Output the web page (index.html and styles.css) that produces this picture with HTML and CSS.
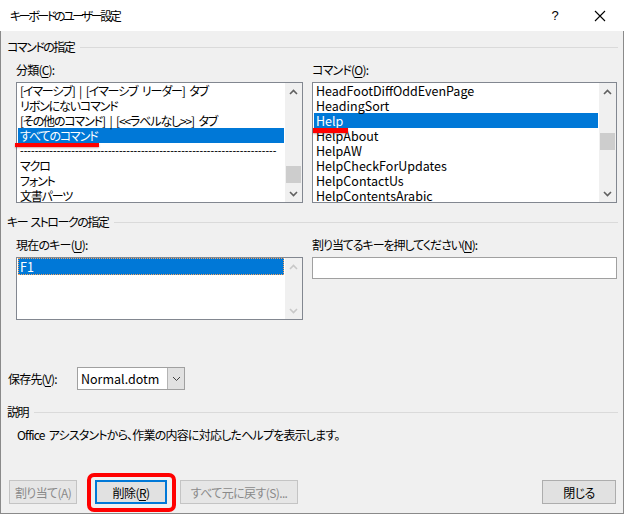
FILE: index.html
```html
<!DOCTYPE html>
<html lang="ja">
<head>
<meta charset="utf-8">
<link rel="stylesheet" href="styles.css">
</head>
<body>
<div class="win">
  <div class="titlebar">
    <span class="title">キーボードのユーザー設定</span>
    <span class="help">?</span>
    <span class="close"><svg width="12" height="12" viewBox="0 0 12 12"><path d="M1 1L11 11M11 1L1 11" stroke="#000" stroke-width="1.1" fill="none"/></svg></span>
  </div>
  <div class="body">
    <div class="group"><span>コマンドの指定</span></div>
    <div class="cols top">
      <div class="col left">
        <div class="label">分類(<u>C</u>):</div>
        <div class="listbox tall">
          <ul class="items jp">
            <li>[イマーシブ] | [イマーシブ リーダー] タブ</li>
            <li>リボンにないコマンド</li>
            <li>[その他のコマンド] | [&lt;&lt;ラベルなし&gt;&gt;] タブ</li>
            <li class="sel">すべてのコマンド</li>
            <li class="dash">----------------------------------------------------------------------</li>
            <li>マクロ</li>
            <li>フォント</li>
            <li>文書パーツ</li>
          </ul>
          <div class="scroll">
            <span class="arrow"><svg width="9" height="6" viewBox="0 0 9 6"><path d="M1 5L4.5 1.5L8 5" stroke="#606060" stroke-width="1.6" fill="none"/></svg></span>
            <div class="track"><div class="thumb thumb-l"></div></div>
            <span class="arrow"><svg width="9" height="6" viewBox="0 0 9 6"><path d="M1 1L4.5 4.5L8 1" stroke="#606060" stroke-width="1.6" fill="none"/></svg></span>
          </div>
        </div>
        <span class="mark mark-l"></span>
      </div>
      <div class="col right">
        <div class="label">コマンド(<u>O</u>):</div>
        <div class="listbox tall">
          <ul class="items latin">
            <li>HeadFootDiffOddEvenPage</li>
            <li>HeadingSort</li>
            <li class="sel">Help</li>
            <li>HelpAbout</li>
            <li>HelpAW</li>
            <li>HelpCheckForUpdates</li>
            <li>HelpContactUs</li>
            <li>HelpContentsArabic</li>
          </ul>
          <div class="scroll">
            <span class="arrow"><svg width="9" height="6" viewBox="0 0 9 6"><path d="M1 5L4.5 1.5L8 5" stroke="#606060" stroke-width="1.6" fill="none"/></svg></span>
            <div class="track"><div class="thumb thumb-r"></div></div>
            <span class="arrow"><svg width="9" height="6" viewBox="0 0 9 6"><path d="M1 1L4.5 4.5L8 1" stroke="#606060" stroke-width="1.6" fill="none"/></svg></span>
          </div>
        </div>
        <span class="mark mark-r"></span>
      </div>
    </div>

    <div class="group g2"><span>キー ストロークの指定</span></div>
    <div class="cols keys">
      <div class="col left">
        <div class="label">現在のキー(<u>U</u>):</div>
        <div class="listbox short">
          <ul class="items latin">
            <li class="sel focus">F1</li>
          </ul>
          <div class="scroll">
            <span class="arrow"><svg width="9" height="6" viewBox="0 0 9 6"><path d="M1 5L4.5 1.5L8 5" stroke="#c8c8c8" stroke-width="1.6" fill="none"/></svg></span>
            <div class="track"></div>
            <span class="arrow"><svg width="9" height="6" viewBox="0 0 9 6"><path d="M1 1L4.5 4.5L8 1" stroke="#c8c8c8" stroke-width="1.6" fill="none"/></svg></span>
          </div>
        </div>
      </div>
      <div class="col right">
        <div class="label assign">割り当てるキーを押してください(<u>N</u>):</div>
        <div class="input"></div>
      </div>
    </div>

    <div class="saveto">
      <span class="label">保存先(<u>V</u>):</span>
      <div class="combo">
        <span class="combo-text">Normal.dotm</span>
        <span class="combo-btn"><svg width="9" height="6" viewBox="0 0 9 6"><path d="M1 1L4.5 4.5L8 1" stroke="#404040" stroke-width="1" fill="none"/></svg></span>
      </div>
    </div>

    <div class="group g3"><span>説明</span></div>
    <p class="desc">Office アシスタントから、作業の内容に対応したヘルプを表示します。</p>

    <div class="buttons">
      <button class="btn dis b1">割り当て(A)</button>
      <span class="focuswrap">
        <button class="btn def b2">削除(<u>R</u>)</button>
        <span class="redbox"></span>
      </span>
      <button class="btn dis b3">すべて元に戻す(S)...</button>
      <button class="btn b4">閉じる</button>
    </div>
  </div>
</div>
</body>
</html>
```

FILE: styles.css
```css
* { box-sizing: border-box; }
html, body { margin: 0; padding: 0; }
body {
  background: #ffffff;
  font-family: "Noto Sans CJK JP", "Noto Sans", sans-serif;
  font-size: 12px;
  color: #000;
  font-feature-settings: "palt";
  letter-spacing: -0.8px;
  word-spacing: 2px;
}
.win {
  width: 624px;
  height: 515px;
  display: flex;
  flex-direction: column;
}
.titlebar {
  height: 31px;
  background: #fff;
  display: flex;
  align-items: center;
  flex: none;
}
.title {
  margin-left: 10px;
  font-size: 12px;
  letter-spacing: -2.4px;
  flex: 1;
}
.help {
  width: 20px;
  text-align: center;
  font-family: "Liberation Sans", sans-serif;
  font-size: 13px;
  letter-spacing: 0;
  margin-right: 23px;
}
.close {
  width: 24px;
  height: 16px;
  display: flex;
  align-items: center;
  justify-content: center;
  margin-right: 12px;
}
.body {
  flex: 1;
  background: #f0f0f0;
  border-left: 1px solid #8a8a8a;
  border-right: 1px solid #8a8a8a;
  border-bottom: 1px solid #8a8a8a;
  margin-bottom: 1px;
  padding: 8px 5px 0 6px;
  display: flex;
  flex-direction: column;
}
.group {
  display: flex;
  align-items: center;
  height: 16px;
  line-height: 16px;
  letter-spacing: -1.5px;
}
.group::after {
  content: "";
  flex: 1;
  height: 1px;
  background: #dadada;
  margin-left: 6px;
}
.label {
  height: 16px;
  line-height: 16px;
  white-space: nowrap;
}
.label.assign { letter-spacing: -1.05px; }
u { text-decoration: underline; text-underline-offset: 2px; }
.cols {
  display: flex;
  margin-left: 9px;
}
.cols.top { margin-top: 7px; }
.col { position: relative; display: flex; flex-direction: column; }
.col.left { width: 287px; }
.col.right { width: 305px; margin-left: 9px; }
.col .label { margin-bottom: 4px; }
.listbox {
  display: flex;
  background: #fff;
  border: 1px solid #828790;
}
.listbox.tall { height: 121px; }
.listbox.short { height: 63px; }
.items {
  list-style: none;
  margin: 0;
  padding: 0 1px;
  flex: 1;
  min-width: 0;
  overflow: hidden;
}
.items li {
  height: 15px;
  line-height: 15px;
  padding-left: 2px;
  white-space: nowrap;
}
.items.jp li { letter-spacing: -1.15px; word-spacing: 3px; }
.items li.sel { background: #0078d7; color: #fff; }
.items li.focus { outline: 1px dotted #f4a460; outline-offset: -1px; height: 17px; line-height: 17px; }
.items.jp li.dash { letter-spacing: 0; word-spacing: 0; font-family: "Liberation Sans", sans-serif; font-size: 11px; }
.items.latin li { font-size: 12.5px; letter-spacing: 0; }
.scroll {
  width: 17px;
  flex: none;
  display: flex;
  flex-direction: column;
  background: #f0f0f0;
}
.arrow {
  height: 17px;
  display: flex;
  align-items: center;
  justify-content: center;
  flex: none;
}
.track { flex: 1; position: relative; }
.thumb {
  position: absolute;
  left: 1px;
  right: 1px;
  background: #cdcdcd;
}
.thumb-l { top: 66px; height: 17px; }
.thumb-r { top: 33px; height: 17px; }
.mark {
  position: absolute;
  height: 4px;
  background: #ff0000;
  box-shadow: 0 1px 2px rgba(120,0,0,0.35);
}
.mark-l { left: -1px; top: 81px; width: 84px; }
.mark-r { left: 1px; top: 66px; width: 35px; height: 5px; }
.g2 { margin-top: 11px; }
.cols.keys { margin-top: 7px; }
.input {
  height: 22px;
  background: #fff;
  border: 1px solid #a0a0a0;
}
.saveto {
  display: flex;
  align-items: center;
  margin-top: 47px;
  height: 23px;
}
.saveto .label { margin-left: 1px; width: 69px; }
.combo {
  width: 108px;
  height: 23px;
  display: flex;
  background: #fff;
  border: 1px solid #a0a0a0;
}
.combo-text {
  flex: 1;
  padding-left: 3px;
  line-height: 21px;
  font-size: 12.5px;
  letter-spacing: 0;
}
.combo-btn {
  width: 17px;
  background: #e1e1e1;
  border-left: 1px solid #b4b4b4;
  display: flex;
  align-items: center;
  justify-content: center;
}
.g3 { margin-top: 14px; }
.desc {
  margin: 7px 0 0 10px;
  line-height: 16px;
  height: 16px;
}
.buttons {
  display: flex;
  align-items: center;
  margin-top: 37px;
  margin-left: 2px;
  height: 24px;
}
.btn {
  font-family: inherit;
  font-size: 12px;
  font-feature-settings: "palt";
  letter-spacing: -0.6px;
  height: 24px;
  padding: 0;
  background: #e1e1e1;
  border: 1px solid #adadad;
  color: #000;
}
.btn.dis { background: #e6e6e6; border-color: #c4c4c4; color: #8a8a8a; }
.btn.def { border: 2px solid #0078d7; }
.b1 { width: 68px; }
.focuswrap { position: relative; display: flex; margin-left: 18px; }
.b2 { width: 72px; }
.redbox {
  position: absolute;
  left: -8px;
  top: -7px;
  right: -9px;
  bottom: -8px;
  border: 4px solid #ff0000;
  border-radius: 7px;
}
.b3 { width: 118px; margin-left: 13px; }
.b4 { width: 74px; margin-left: auto; margin-right: 2px; }
```
